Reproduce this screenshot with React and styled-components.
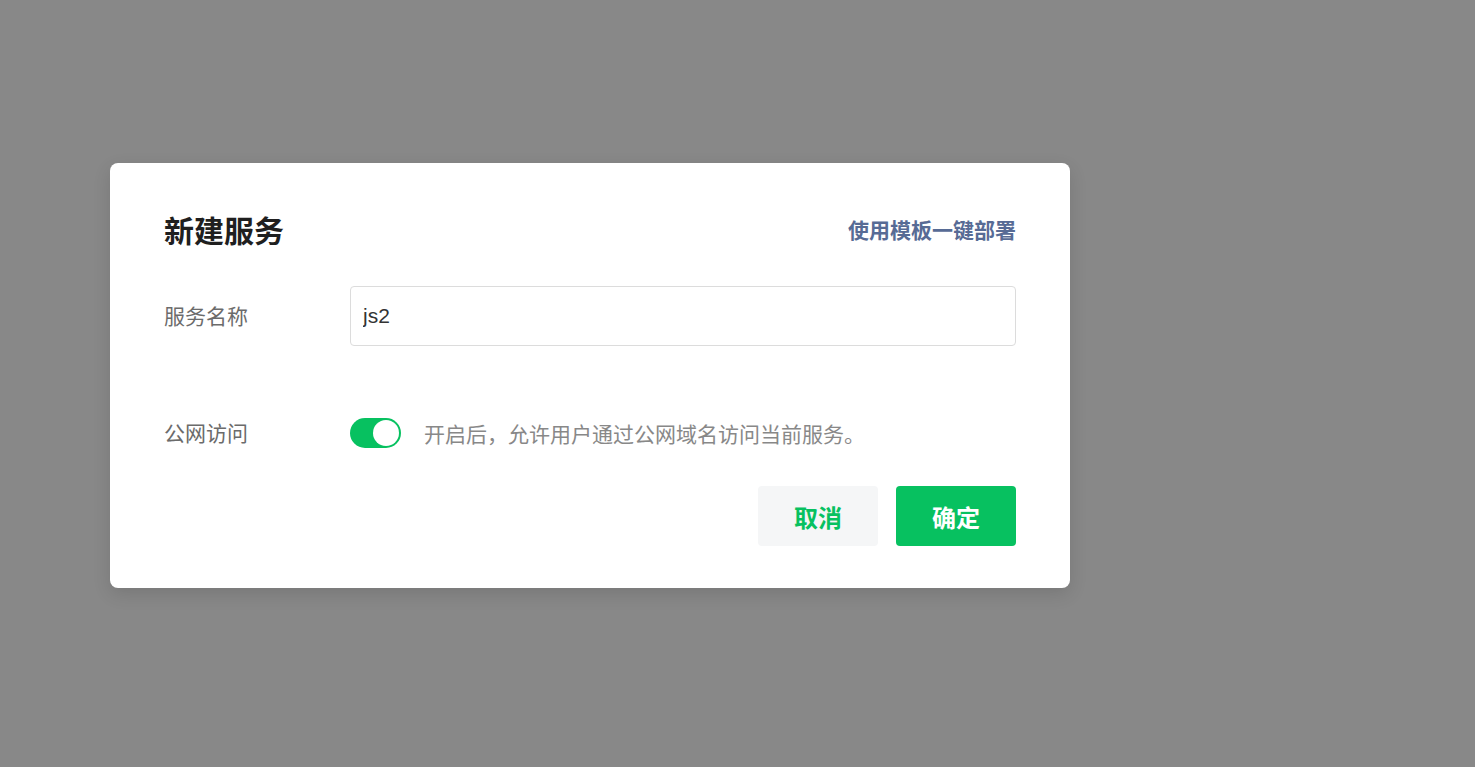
import React, { useState } from 'react'
import styled, { createGlobalStyle } from 'styled-components'

const GlobalStyle = createGlobalStyle`
  html, body {
    margin: 0;
    padding: 0;
    background: #888888;
    font-family: "Microsoft YaHei", "Noto Sans CJK SC", "Noto Sans", sans-serif;
  }
`

const Mask = styled.div`
  min-height: 767px;
  box-sizing: border-box;
  padding: 163px 0 0 110px;
  background: #888888;
`

const Dialog = styled.div`
  width: 960px;
  box-sizing: border-box;
  padding: 38px 54px 42px;
  background: #fff;
  border-radius: 8px;
  box-shadow: 0 6px 18px rgba(0, 0, 0, 0.12);
`

const Header = styled.div`
  height: 56px;
  display: flex;
  align-items: center;
  justify-content: space-between;
`

const Title = styled.h3`
  margin: 0;
  font-size: 30px;
  font-weight: 700;
  color: #1f1f1f;
`

const Link = styled.a`
  font-size: 21px;
  font-weight: 700;
  color: #576b95;
  cursor: pointer;
`

const Row = styled.div`
  display: flex;
  align-items: center;
  height: 60px;
  margin-top: ${p => p.$top}px;
`

const Label = styled.label`
  width: 186px;
  flex-shrink: 0;
  font-size: 21px;
  color: #6b6b6b;
  margin-top: -2px;
`

const Input = styled.input`
  flex: 1;
  height: 60px;
  box-sizing: border-box;
  padding: 0 12px;
  border: 1px solid #dcdcdc;
  border-radius: 4px;
  font-family: "Liberation Sans", "Noto Sans CJK SC", sans-serif;
  font-size: 21px;
  color: #333;
  outline: none;
`

const Switch = styled.button`
  position: relative;
  width: 51px;
  height: 30px;
  padding: 0;
  border: none;
  border-radius: 15px;
  background: ${p => (p.$on ? '#07c160' : '#e5e5e5')};
  cursor: pointer;

  &::after {
    content: '';
    position: absolute;
    top: 2px;
    left: ${p => (p.$on ? '23px' : '2px')};
    width: 26px;
    height: 26px;
    border-radius: 50%;
    background: #fff;
  }
`

const Hint = styled.span`
  margin-left: 23px;
  font-size: 21px;
  color: #888;
`

const Footer = styled.div`
  display: flex;
  justify-content: flex-end;
  gap: 18px;
  margin-top: 23px;
`

const Button = styled.button`
  width: 120px;
  height: 60px;
  border: none;
  border-radius: 4px;
  font-family: inherit;
  font-size: 24px;
  font-weight: 700;
  cursor: pointer;
  background: ${p => (p.$primary ? '#07c160' : '#f5f6f7')};
  color: ${p => (p.$primary ? '#fff' : '#07c160')};
`

export default function App() {
  const [name, setName] = useState('js2')
  const [isPublic, setIsPublic] = useState(true)

  return (
    <Mask>
      <GlobalStyle />
      <Dialog>
        <Header>
          <Title>新建服务</Title>
          <Link>使用模板一键部署</Link>
        </Header>
        <Row $top={29}>
          <Label>服务名称</Label>
          <Input value={name} onChange={e => setName(e.target.value)} />
        </Row>
        <Row $top={57}>
          <Label>公网访问</Label>
          <Switch $on={isPublic} onClick={() => setIsPublic(!isPublic)} />
          <Hint>开启后，允许用户通过公网域名访问当前服务。</Hint>
        </Row>
        <Footer>
          <Button>取消</Button>
          <Button $primary>确定</Button>
        </Footer>
      </Dialog>
    </Mask>
  )
}
